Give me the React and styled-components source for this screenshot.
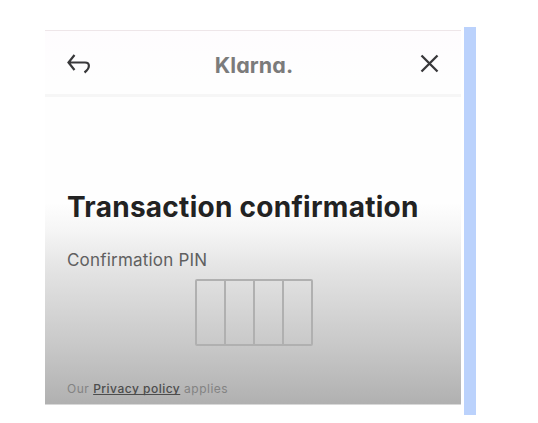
import React from "react"
import styled, { createGlobalStyle } from "styled-components"

const GlobalStyle = createGlobalStyle`
  body {
    margin: 0;
    background: #fff;
    font-family: Inter, "Liberation Sans", sans-serif;
  }
`
const Page = styled.div`
  display: flex;
  align-items: flex-start;
  box-sizing: border-box;
  width: 538px;
  height: 423px;
  padding: 27px 0 0 45px;
`
const Panel = styled.main`
  box-sizing: border-box;
  width: 416px;
  height: 375px;
  margin: 3px 3px 0 0;
  border-top: 1px solid #eee6e9;
  border-bottom: 1px solid #d8d8d8;
  background: linear-gradient(
    #fefcfe 0,
    #fefefe 50px,
    #fefefe 172px,
    #f5f5f5 200px,
    #e3e3e3 240px,
    #c8c8c8 315px,
    #b0b0b0 374px
  );
`
const Rail = styled.aside`
  width: 12px;
  height: 388px;
  background: #bbd2fc;
`
const Header = styled.header`
  display: flex;
  align-items: center;
  justify-content: space-between;
  box-sizing: border-box;
  height: 66px;
  padding: 0 20px;
  border-bottom: 3px solid #f6f6f6;
`
const IconButton = styled.button`
  display: flex;
  padding: 0;
  border: 0;
  background: none;
  color: #38383a;
`
const Logo = styled.div`
  padding-top: 5px;
  font-size: 21.5px;
  font-weight: 700;
  font-feature-settings: "cv11";
  line-height: 26px;
  letter-spacing: 0.1px;
  color: #7b7b7b;
`
const Content = styled.section`
  padding: 93px 22px 0;
`
const Title = styled.h1`
  margin: 0;
  font-size: 28px;
  font-weight: 700;
  line-height: 34px;
  letter-spacing: 0.27px;
  white-space: nowrap;
  color: #222;
`
const Label = styled.div`
  margin-top: 25px;
  font-size: 17px;
  line-height: 22px;
  letter-spacing: 0.2px;
  white-space: nowrap;
  color: #606060;
`
const PinRow = styled.div`
  display: flex;
  box-sizing: border-box;
  width: 118px;
  height: 67px;
  margin: 8px 0 0 128px;
  border: 2px solid #b0b0b0;
  border-radius: 2px;
`
const PinCell = styled.div`
  flex: 1;
  & + & {
    border-left: 2px solid #b0b0b0;
  }
`
const Footer = styled.p`
  margin: 34px 0 0;
  font-size: 12px;
  line-height: 18px;
  letter-spacing: 0.49px;
  white-space: nowrap;
  color: #838383;
`
const PolicyLink = styled.span`
  font-weight: 500;
  color: #4c4c4c;
  text-decoration: underline;
  text-decoration-skip-ink: none;
  text-underline-offset: 1px;
`

const BackIcon = () => (
  <svg width="26" height="24" viewBox="0 0 26 24" fill="none" stroke="currentColor" strokeWidth="2.2">
    <path d="M9.5 4 3.5 11.5 9.5 19M3.5 11.5H20C25 11.5 25.5 17 19.5 21.5" />
  </svg>
)

const CloseIcon = () => (
  <svg width="24" height="24" viewBox="0 0 24 24" fill="none" stroke="currentColor" strokeWidth="2.3">
    <path d="m4.5 4.5 16 16M20.5 4.5l-16 16" />
  </svg>
)

const App = () => (
  <>
    <GlobalStyle />
    <Page>
      <Panel>
        <Header>
          <IconButton aria-label="Back">
            <BackIcon />
          </IconButton>
          <Logo>Klarna.</Logo>
          <IconButton aria-label="Close">
            <CloseIcon />
          </IconButton>
        </Header>
        <Content>
          <Title>Transaction confirmation</Title>
          <Label>Confirmation PIN</Label>
          <PinRow>
            {[0, 1, 2, 3].map(i => (
              <PinCell key={i} />
            ))}
          </PinRow>
          <Footer>
            Our <PolicyLink>Privacy policy</PolicyLink> applies
          </Footer>
        </Content>
      </Panel>
      <Rail />
    </Page>
  </>
)

export default App
